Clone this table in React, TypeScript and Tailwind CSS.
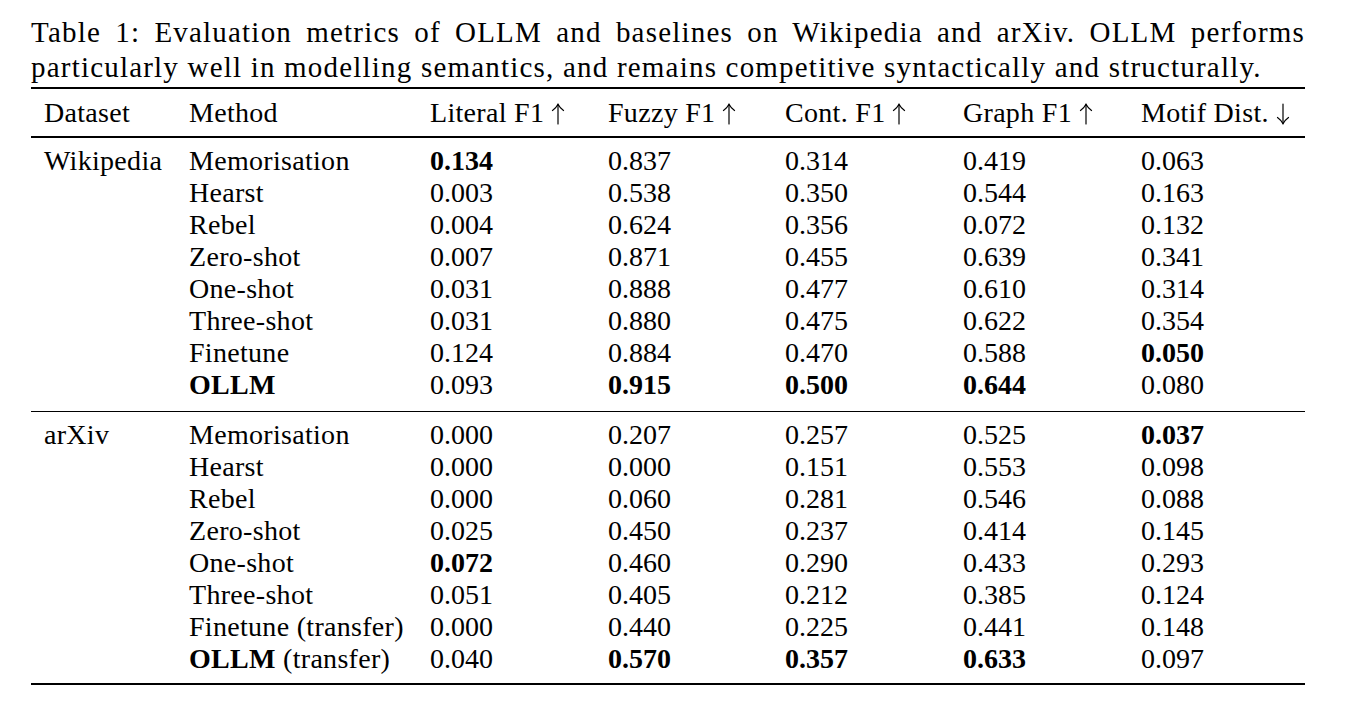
import React from "react";

type Cell = { v: string; b?: boolean };
type Row = { ds?: string; m: React.ReactNode; cells: Cell[] };

const c = (v: string, b = false): Cell => ({ v, b });

const wiki: Row[] = [
  { ds: "Wikipedia", m: "Memorisation", cells: [c("0.134", true), c("0.837"), c("0.314"), c("0.419"), c("0.063")] },
  { m: "Hearst", cells: [c("0.003"), c("0.538"), c("0.350"), c("0.544"), c("0.163")] },
  { m: "Rebel", cells: [c("0.004"), c("0.624"), c("0.356"), c("0.072"), c("0.132")] },
  { m: "Zero-shot", cells: [c("0.007"), c("0.871"), c("0.455"), c("0.639"), c("0.341")] },
  { m: "One-shot", cells: [c("0.031"), c("0.888"), c("0.477"), c("0.610"), c("0.314")] },
  { m: "Three-shot", cells: [c("0.031"), c("0.880"), c("0.475"), c("0.622"), c("0.354")] },
  { m: "Finetune", cells: [c("0.124"), c("0.884"), c("0.470"), c("0.588"), c("0.050", true)] },
  { m: <span className="font-bold">OLLM</span>, cells: [c("0.093"), c("0.915", true), c("0.500", true), c("0.644", true), c("0.080")] },
];

const arxiv: Row[] = [
  { ds: "arXiv", m: "Memorisation", cells: [c("0.000"), c("0.207"), c("0.257"), c("0.525"), c("0.037", true)] },
  { m: "Hearst", cells: [c("0.000"), c("0.000"), c("0.151"), c("0.553"), c("0.098")] },
  { m: "Rebel", cells: [c("0.000"), c("0.060"), c("0.281"), c("0.546"), c("0.088")] },
  { m: "Zero-shot", cells: [c("0.025"), c("0.450"), c("0.237"), c("0.414"), c("0.145")] },
  { m: "One-shot", cells: [c("0.072", true), c("0.460"), c("0.290"), c("0.433"), c("0.293")] },
  { m: "Three-shot", cells: [c("0.051"), c("0.405"), c("0.212"), c("0.385"), c("0.124")] },
  { m: "Finetune (transfer)", cells: [c("0.000"), c("0.440"), c("0.225"), c("0.441"), c("0.148")] },
  {
    m: (
      <>
        <span className="font-bold">OLLM</span> (transfer)
      </>
    ),
    cells: [c("0.040"), c("0.570", true), c("0.357", true), c("0.633", true), c("0.097")],
  },
];

const grid =
  "grid grid-cols-[145px_241px_178px_177px_178px_178px_164px] pl-[13px] h-[32px] items-center whitespace-nowrap";

function Arrow({ up }: { up: boolean }) {
  return (
    <svg
      width="14"
      height="22"
      viewBox="0 0 14 22"
      className="inline-block ml-[7px] align-[-3px]"
      fill="none"
      stroke="black"
      strokeWidth="1.2"
      strokeLinecap="round"
    >
      {up ? (
        <>
          <path d="M7 1.5 L7 21" />
          <path d="M1.5 7.5 Q5 5 7 1.2 Q9 5 12.5 7.5" />
        </>
      ) : (
        <>
          <path d="M7 1 L7 20.5" />
          <path d="M1.5 14.5 Q5 17 7 20.8 Q9 17 12.5 14.5" />
        </>
      )}
    </svg>
  );
}

function TRow({ r }: { r: Row }) {
  return (
    <div className={grid}>
      <div className="tracking-[0.3px]">{r.ds ?? ""}</div>
      <div className="tracking-[0.3px]">{r.m}</div>
      {r.cells.map((x, i) => (
        <div key={i} className={x.b ? "font-bold" : ""}>
          {x.v}
        </div>
      ))}
    </div>
  );
}

export default function App() {
  return (
    <div
      className="bg-white text-black w-[1346px] h-[704px] pt-[15px] pl-[31px] text-[28px] leading-[32px]"
      style={{ fontFamily: '"Liberation Serif", "Times New Roman", serif' }}
    >
      <div className="w-[1274px]">
        <div className="text-[29px] tracking-[1.2px]">
          <div className="leading-[35px] text-justify [text-align-last:justify] whitespace-nowrap">
            Table 1: Evaluation metrics of OLLM and baselines on Wikipedia and arXiv. OLLM performs
          </div>
          <div className="leading-[35px] whitespace-nowrap">
            particularly well in modelling semantics, and remains competitive syntactically and structurally.
          </div>
        </div>
        <div className="mt-[2px] h-[2px] bg-black" />
        <div className="pt-[8px] pb-[7px]">
          <div className={grid}>
            <div className="tracking-[0.3px]">Dataset</div>
            <div className="tracking-[0.3px]">Method</div>
            <div className="tracking-[0.3px]">
              Literal F1
              <Arrow up />
            </div>
            <div className="tracking-[0.3px]">
              Fuzzy F1
              <Arrow up />
            </div>
            <div className="tracking-[0.3px]">
              Cont. F1
              <Arrow up />
            </div>
            <div className="tracking-[0.3px]">
              Graph F1
              <Arrow up />
            </div>
            <div className="tracking-[0.3px]">
              Motif Dist.
              <Arrow up={false} />
            </div>
          </div>
        </div>
        <div className="h-[1.5px] bg-black" />
        <div className="pt-[7.5px] pb-[9.5px]">
          {wiki.map((r, i) => (
            <TRow key={i} r={r} />
          ))}
        </div>
        <div className="h-[1.5px] bg-black" />
        <div className="pt-[7px] pb-[8px]">
          {arxiv.map((r, i) => (
            <TRow key={i} r={r} />
          ))}
        </div>
        <div className="h-[2px] bg-black" />
      </div>
    </div>
  );
}
